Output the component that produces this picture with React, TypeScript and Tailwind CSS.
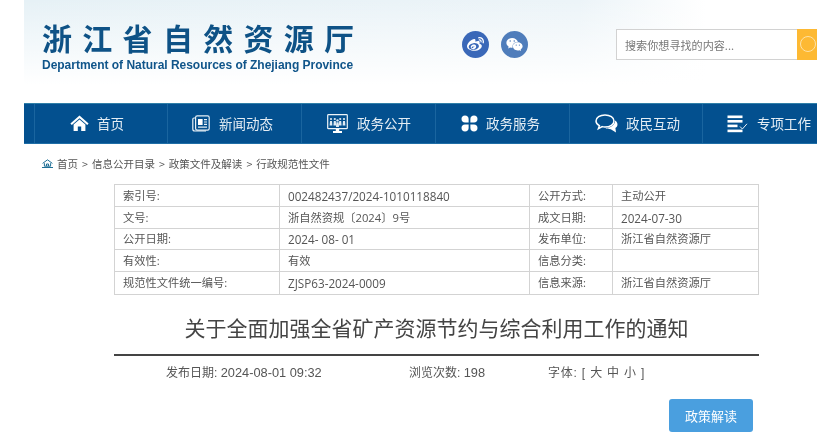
import React from "react";
import { FaWeibo, FaWeixin } from "react-icons/fa";

const cjk = "font-['Open_Sans','Noto_Sans_CJK_SC',sans-serif]";

const HomeIcon = () => (
  <svg width="19" height="17" viewBox="0 0 19 17" fill="#fff">
    <path d="M9.5 0.5 L18.6 8.4 L17.2 9.9 L9.5 3.3 L1.8 9.9 L0.4 8.4 Z" />
    <path d="M3.6 9.6 L9.5 4.6 L15.4 9.6 V16 H11.2 V11.6 H7.8 V16 H3.6 Z" />
  </svg>
);
const NewsIcon = () => (
  <svg width="18" height="17" viewBox="0 0 18 17" fill="none" stroke="#e8f0f6" strokeWidth="1.2">
    <rect x="3.6" y="0.8" width="13.6" height="14.4" rx="1.6" />
    <path d="M3.6 3 H2 a1.2 1.2 0 0 0 -1.2 1.2 V14 a2 2 0 0 0 2 2 H14" />
    <rect x="6" y="4" width="4.6" height="6" fill="#fff" stroke="none" />
    <path d="M12 4.6 H15 M12 7 H15 M12 9.4 H15 M6 12.2 H15" />
  </svg>
);
const MonitorIcon = () => (
  <svg width="21" height="20" viewBox="0 0 21 20" fill="none" stroke="#eef4f8">
    <rect x="0.7" y="0.7" width="19.6" height="14" rx="0.8" strokeWidth="1.2" />
    <g fill="#dfeaf3" stroke="none">
      <circle cx="4" cy="5" r="1.1" /><circle cx="7.8" cy="5" r="1.1" /><circle cx="13.2" cy="5" r="1.1" /><circle cx="17" cy="5" r="1.1" />
      <circle cx="10.5" cy="6.4" r="1.2" />
      <path d="M2.6 11.5 L3 7 H5 L5.4 11.5 Z M6.4 11.5 L6.8 7 H8.8 L9.2 11.5 Z M11.8 11.5 L12.2 7 H14.2 L14.6 11.5 Z M15.6 11.5 L16 7 H18 L18.4 11.5 Z M9 13 L9.4 8.2 H11.6 L12 13 Z" />
      <rect x="8.8" y="15" width="3.4" height="2" fill="#fff" />
      <rect x="6" y="17" width="9" height="2" fill="#fff" />
    </g>
  </svg>
);
const CloverIcon = () => (
  <svg width="17" height="17" viewBox="0 0 17 17" fill="#fff">
    <path d="M4 0.5 C6.2 0.5 7.6 1.8 7.6 4 V7.6 H4 C1.8 7.6 0.5 6.2 0.5 4 C0.5 1.8 1.8 0.5 4 0.5 Z" />
    <path d="M13 0.5 C10.8 0.5 9.4 1.8 9.4 4 V7.6 H13 C15.2 7.6 16.5 6.2 16.5 4 C16.5 1.8 15.2 0.5 13 0.5 Z" />
    <path d="M4 16.5 C6.2 16.5 7.6 15.2 7.6 13 V9.4 H4 C1.8 9.4 0.5 10.8 0.5 13 C0.5 15.2 1.8 16.5 4 16.5 Z" />
    <path d="M13 16.5 C10.8 16.5 9.4 15.2 9.4 13 V9.4 H13 C15.2 9.4 16.5 10.8 16.5 13 C16.5 15.2 15.2 16.5 13 16.5 Z" />
  </svg>
);
const ChatIcon = () => (
  <svg width="23" height="19" viewBox="0 0 23 19" fill="none">
    <path d="M10 1 C5 1 1 3.6 1 7 C1 9 2.3 10.6 4.4 11.7 L3.4 14.6 L7.2 12.6 C8.1 12.9 9 13 10 13 C15 13 19 10.4 19 7 C19 3.6 15 1 10 1 Z" stroke="#fff" strokeWidth="1.5" />
    <path d="M20.2 6.5 C22 7.8 22.8 9.4 22.4 11.2 C22.1 12.5 21.2 13.4 20.4 14 L21 18.4 L15.8 15.2 C13.6 15.2 11.6 14.8 10.4 14 C15.4 14 19.8 11.4 20.2 6.5 Z" fill="#fff" />
  </svg>
);
const ListCheckIcon = () => (
  <svg width="21" height="18" viewBox="0 0 21 18" fill="#fff">
    <rect x="0.5" y="0.5" width="15" height="2.6" />
    <rect x="0.5" y="5" width="15" height="2.6" />
    <rect x="0.5" y="9.6" width="10" height="2.6" />
    <rect x="0.5" y="14.6" width="15" height="2.6" />
    <path d="M13 11.5 L15.4 14 L20 8.8" fill="none" stroke="#e8f0f6" strokeWidth="1" />
  </svg>
);
const SmallHome = () => (
  <svg width="11" height="9" viewBox="0 0 11 9" fill="none" stroke="#1f6f96" strokeWidth="1">
    <path d="M0.6 4.4 L5.5 0.8 L10.4 4.4" />
    <path d="M2.4 4.2 V7.2 H8.6 V4.2 M4.5 7 V5 H6.5 V7" />
    <path d="M0 8.5 H11" />
  </svg>
);

const nav: [React.ReactNode, string, string][] = [
  [<HomeIcon />, "首页", "gap-[8px] w-[133px] pl-[35px]"],
  [<NewsIcon />, "新闻动态", "gap-[9px] w-[134px] pl-[24px]"],
  [<MonitorIcon />, "政务公开", "gap-[9px] w-[134px] pl-[25px]"],
  [<CloverIcon />, "政务服务", "gap-[8px] w-[134px] pl-[25px]"],
  [<ChatIcon />, "政民互动", "gap-[8px] w-[133px] pl-[25px]"],
  [<ListCheckIcon />, "专项工作", "gap-[9px] w-[115px] pl-[24px]"],
];

const rows: [string, string, string, string, string][] = [
  ["h-[22px]", "索引号:", "002482437/2024-1010118840", "公开方式:", "主动公开"],
  ["h-[22px]", "文号:", "浙自然资规〔2024〕9号", "成文日期:", "2024-07-30"],
  ["h-[21px]", "公开日期:", "2024- 08- 01", "发布单位:", "浙江省自然资源厅"],
  ["h-[22px]", "有效性:", "有效", "信息分类:", ""],
  ["h-[23px]", "规范性文件统一编号:", "ZJSP63-2024-0009", "信息来源:", "浙江省自然资源厅"],
];

const latin = /^[A-Za-z0-9/\- ]+$/;

export default function App() {
  return (
    <div className={`w-[830px] h-[448px] overflow-hidden bg-white blur-[0.3px] ${cjk}`}>
      <div className="ml-[24px] w-[793px]">
        <header className="h-[103px] flex bg-[linear-gradient(180deg,rgba(255,255,255,0)_0%,#ffffff_82%),linear-gradient(90deg,#e6f1f6_0%,#ecf4f8_70%,#ffffff_86%)]">
          <div className="pl-[18px] pt-[21px] w-[438px] shrink-0">
            <div className="text-[30px] leading-[32px] font-bold tracking-[10.3px] text-[#0e5286] font-['Noto_Sans_CJK_SC',sans-serif] whitespace-nowrap">浙江省自然资源厅</div>
            <div className="text-[12px] leading-[14px] mt-[5px] font-bold tracking-[-0.02px] text-[#10558a] font-['Liberation_Sans',sans-serif] whitespace-nowrap">Department of Natural Resources of Zhejiang Province</div>
          </div>
          <div className="flex gap-[12px] pt-[31px] w-[154px] shrink-0">
            <div className="w-[27px] h-[27px] rounded-full bg-[#3a68b8] flex items-center justify-center text-white"><FaWeibo size={17} /></div>
            <div className="w-[27px] h-[27px] rounded-full bg-[#4f7dbb] flex items-center justify-center text-white"><FaWeixin size={17} /></div>
          </div>
          <div className="flex pt-[29px] h-[60px]">
            <div className="w-[181px] h-[31px] bg-white border border-[#d2d2d2] border-r-0 pl-[8px] text-[11.1px] leading-[30px] text-[#777] font-['Noto_Sans_CJK_SC',sans-serif] whitespace-nowrap">搜索你想寻找的内容...</div>
            <div className="w-[20px] h-[31px] bg-[#fdb933] overflow-hidden pl-[3px] pt-[7px] flex">
              <div className="w-[16px] h-[16px] rounded-full border border-[#fde2a6] shrink-0" />
            </div>
          </div>
        </header>
        <nav className="h-[41px] flex bg-[#03508f] border-t border-t-[#2f7fa8] border-b border-b-[#1f6ea6] font-['Noto_Sans_CJK_SC',sans-serif]">
          <div className="w-[10px] shrink-0" />
          {nav.map(([icon, label, cls]) => (
            <div key={label} className={`${cls} shrink-0 flex items-center border-l border-l-[#1a659f] text-[13.5px] text-[#e4edf4] whitespace-nowrap`}>
              {icon}
              <span>{label}</span>
            </div>
          ))}
        </nav>
        <div className="h-[40px] pl-[18px] flex items-center gap-[4px] pb-[1px] text-[10.5px] text-[#555] [word-spacing:1.7px] font-['Noto_Sans_CJK_SC',sans-serif] whitespace-nowrap">
          <SmallHome />
          <span>首页 &gt; 信息公开目录 &gt; 政策文件及解读 &gt; 行政规范性文件</span>
        </div>
        <table className="ml-[90px] w-[644px] table-fixed border-collapse text-[11.25px] text-[#555]">
          <colgroup>
            <col className="w-[165px]" />
            <col className="w-[250px]" />
            <col className="w-[83px]" />
            <col className="w-[146px]" />
          </colgroup>
          <tbody>
            {rows.map(([h, ...cells]) => (
              <tr key={cells[0]} className={h}>
                {cells.map((c, i) => (
                  <td key={i} className={`border border-[#d3d3d3] pl-[8px] pr-0 py-0 leading-[16px] whitespace-nowrap ${latin.test(c) ? "text-[11.7px]" : ""}`}>{c}</td>
                ))}
              </tr>
            ))}
          </tbody>
        </table>
        <h1 className="ml-[90px] w-[645px] h-[61px] border-b-2 border-b-[#444] text-center text-[21px] leading-[64px] font-normal text-[#444] font-['Noto_Sans_CJK_SC',sans-serif]">关于全面加强全省矿产资源节约与综合利用工作的通知</h1>
        <div className="ml-[142px] mt-[7px] h-[20px] flex items-center text-[12px] text-[#555] whitespace-nowrap font-['Liberation_Sans','Noto_Sans_CJK_SC',sans-serif]">
          <span className="w-[243px]">发布日期: <span className="text-[12.8px]">2024-08-01 09:32</span></span>
          <span className="w-[139px]">浏览次数: <span className="text-[12.8px]">198</span></span>
          <span className="tracking-[0.8px]">字体: [ 大 中 小 ]</span>
        </div>
        <div className="flex justify-end w-[729px] mt-[16px]">
          <button className="w-[84px] h-[33px] rounded-[3px] bg-[#4a9fdf] text-white text-[13px] font-['Noto_Sans_CJK_SC',sans-serif]">政策解读</button>
        </div>
      </div>
    </div>
  );
}
